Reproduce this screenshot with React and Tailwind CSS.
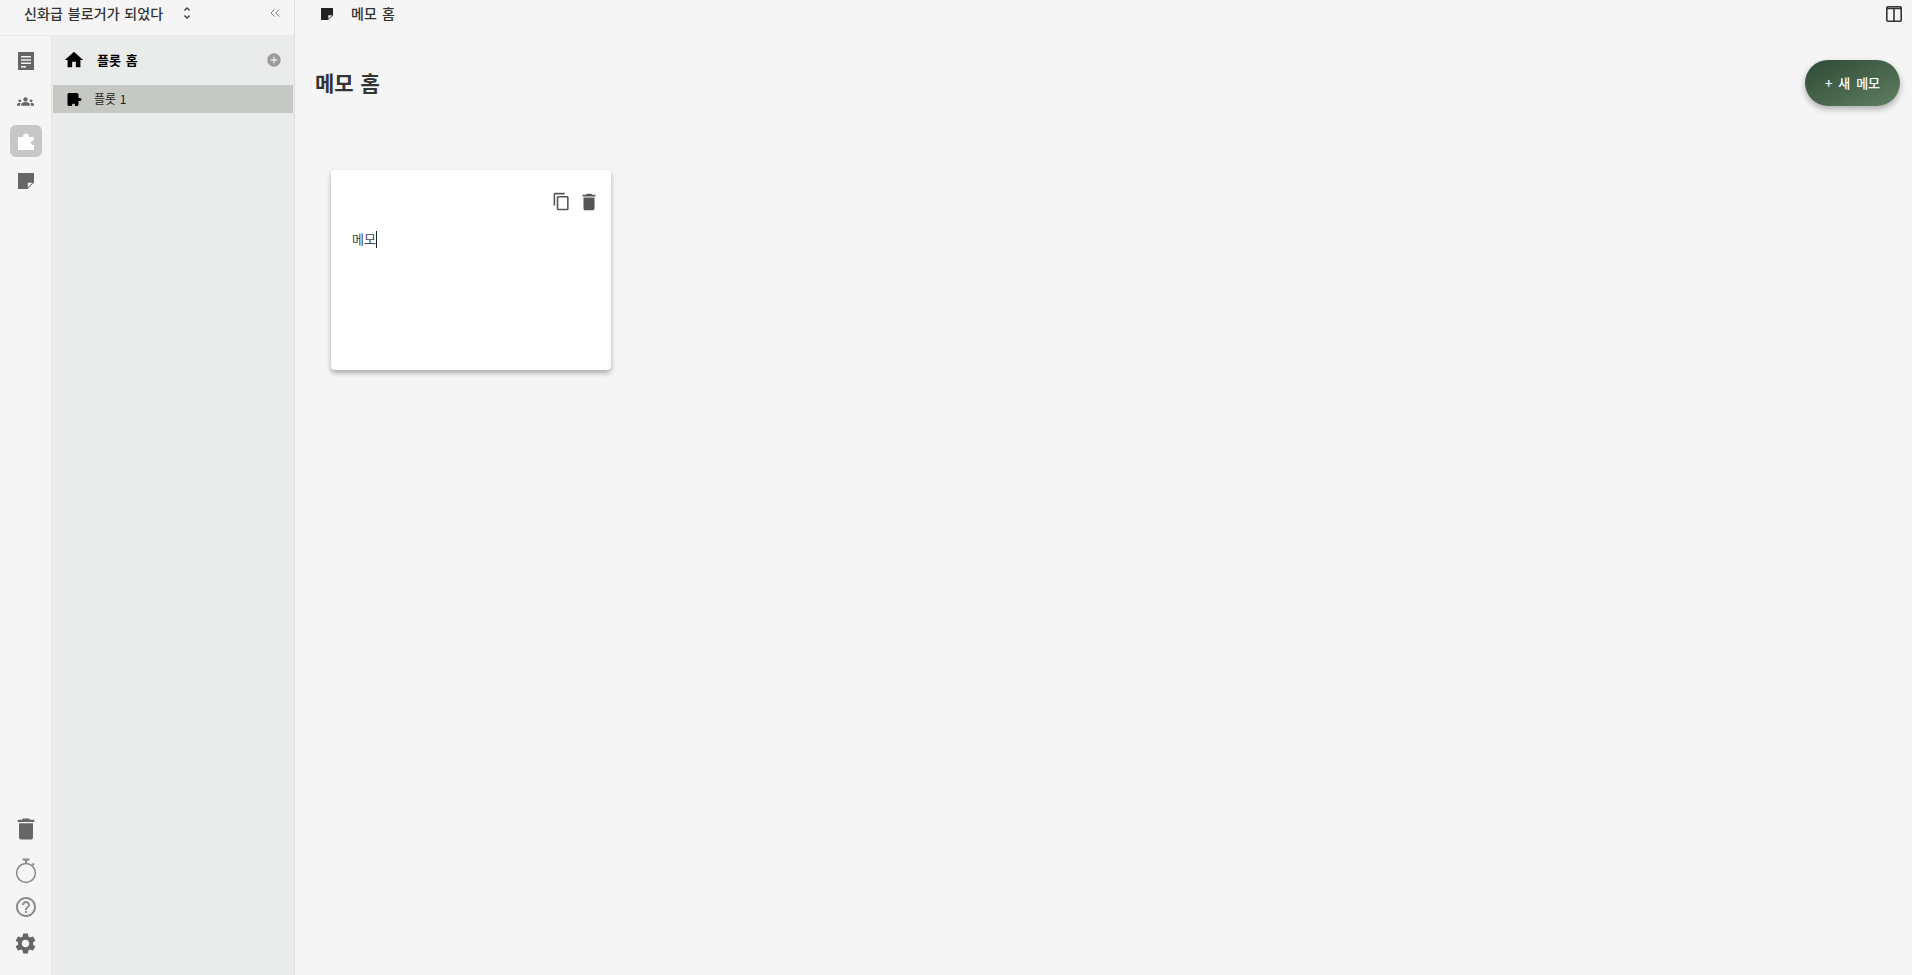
import { ChevronsLeft } from "lucide-react"

const PATHS = {
  article: "M4 3h16v18H4zM7 7v1.4h10V7zm0 3.3v1.4h10v-1.4zm0 3.3V15h10v-1.4zm0 3.4v1.4h5V17z",
  groups: "M12 12.75c1.63 0 3.07.39 4.24.9 1.08.48 1.76 1.56 1.76 2.73V18H6v-1.61c0-1.18.68-2.26 1.76-2.73 1.17-.52 2.61-.91 4.24-.91zM4 13c1.1 0 2-.9 2-2s-.9-2-2-2-2 .9-2 2 .9 2 2 2zm1.13 1.1c-.37-.06-.74-.1-1.13-.1-.99 0-1.93.21-2.78.58C.48 14.9 0 15.62 0 16.43V18h4.5v-1.61c0-.83.23-1.61.63-2.29zM20 13c1.1 0 2-.9 2-2s-.9-2-2-2-2 .9-2 2 .9 2 2 2zm4 3.43c0-.81-.48-1.53-1.22-1.85-.85-.37-1.79-.58-2.78-.58-.39 0-.76.04-1.13.1.4.68.63 1.46.63 2.29V18H24v-1.57zM12 6c1.66 0 3 1.34 3 3s-1.34 3-3 3-3-1.34-3-3 1.34-3 3-3z",
  home: "M10 20v-6h4v6h5v-8h3L12 3 2 12h3v8z",
  add: "M12 2C6.48 2 2 6.48 2 12s4.48 10 10 10 10-4.48 10-10S17.52 2 12 2zm5 11h-4v4h-2v-4H7v-2h4V7h2v4h4v2z",
  trash: "M6 19c0 1.1.9 2 2 2h8c1.1 0 2-.9 2-2V7H6v12zM19 4h-3.5l-1-1h-5l-1 1H5v2h14V4z",
  copy: "M16 1H4c-1.1 0-2 .9-2 2v14h2V3h12V1zm3 4H8c-1.1 0-2 .9-2 2v14c0 1.1.9 2 2 2h11c1.1 0 2-.9 2-2V7c0-1.1-.9-2-2-2zm0 16H8V7h11v14z",
  help: "M11 18h2v-2h-2v2zm1-16C6.48 2 2 6.48 2 12s4.48 10 10 10 10-4.48 10-10S17.52 2 12 2zm0 18c-4.41 0-8-3.59-8-8s3.59-8 8-8 8 3.59 8 8-3.59 8-8 8zm0-14c-2.21 0-4 1.79-4 4h2c0-1.1.9-2 2-2s2 .9 2 2c0 2-3 1.75-3 5h2c0-2.25 3-2.5 3-5 0-2.21-1.79-4-4-4z",
  settings: "M19.14 12.94c.04-.3.06-.61.06-.94 0-.32-.02-.64-.07-.94l2.03-1.58c.18-.14.23-.41.12-.61l-1.92-3.32c-.12-.22-.37-.29-.59-.22l-2.39.96c-.5-.38-1.03-.7-1.62-.94l-.36-2.54c-.04-.24-.24-.41-.48-.41h-3.84c-.24 0-.43.17-.47.41l-.36 2.54c-.59.24-1.13.57-1.62.94l-2.39-.96c-.22-.08-.47 0-.59.22L2.74 8.87c-.12.21-.08.47.12.61l2.03 1.58c-.05.3-.09.63-.09.94s.02.64.07.94l-2.03 1.58c-.18.14-.23.41-.12.61l1.92 3.32c.12.22.37.29.59.22l2.39-.96c.5.38 1.03.7 1.62.94l.36 2.54c.05.24.24.41.48.41h3.84c.24 0 .44-.17.47-.41l.36-2.54c.59-.24 1.13-.56 1.62-.94l2.39.96c.22.08.47 0 .59-.22l1.92-3.32c.12-.22.07-.47-.12-.61l-2.01-1.58zM12 15.6c-1.98 0-3.6-1.62-3.6-3.6s1.62-3.6 3.6-3.6 3.6 1.62 3.6 3.6-1.62 3.6-3.6 3.6z",
  unfold: "M12 5.83 15.17 9l1.41-1.41L12 3 7.41 7.59 8.83 9 12 5.83zm0 12.34L8.83 15l-1.41 1.41L12 21l4.59-4.59L15.17 15 12 18.17z",
}

function Icon({ name, className }) {
  return (
    <svg viewBox="0 0 24 24" fill="currentColor" fillRule="evenodd" className={className}>
      <path d={PATHS[name]} />
    </svg>
  )
}

// sharp square with a folded bottom right corner
function NoteIcon({ className }) {
  return (
    <svg viewBox="0 0 16 16" fill="currentColor" fillRule="evenodd" className={className}>
      <path d="M0 0h16v9.5L9.5 16H0zM9.8 14.6V9.8h4.8z" />
    </svg>
  )
}

function PuzzleRail({ className }) {
  return (
    <svg viewBox="0 0 24 24" fill="currentColor" className={className}>
      <path d="M4 8h5c0-2 1-3.5 3-3.5s3 1.5 3 3.5h5v3.5c-2 0-3 .8-3 2.2s1 2.3 3 2.3V21H4z" />
    </svg>
  )
}

function PuzzleRow({ className }) {
  return (
    <svg viewBox="0 0 15 13" fill="currentColor" className={className}>
      <path d="M2 0h8a1.5 1.5 0 0 1 1.5 1.5V5H13a1.5 1.5 0 0 1 0 3h-1.5v3.5A1.5 1.5 0 0 1 10 13H8v-1a1.5 1.5 0 0 0-3 0v1H2a1.5 1.5 0 0 1-1.5-1.5v-10A1.5 1.5 0 0 1 2 0z" />
    </svg>
  )
}

function Timer({ className }) {
  return (
    <svg viewBox="0 0 24 26" fill="none" stroke="currentColor" className={className}>
      <circle cx="12" cy="15" r="9.4" strokeWidth="1.5" />
      <path d="M8.5 1.5h7M12 1.5V5.5M18.5 7l1.5-1.5" strokeWidth="2" />
    </svg>
  )
}

function RailButton({ children, active }) {
  return (
    <div className={`w-8 h-8 flex items-center justify-center rounded-md ${active ? "bg-[#c5c8c4] text-white" : "text-[#666666]"}`}>
      {children}
    </div>
  )
}

export default function App() {
  return (
    <div className="flex h-[975px] overflow-hidden bg-[#f5f5f5] text-[#333333] font-['Noto_Sans_CJK_KR','Noto_Sans',sans-serif]">
      {/* Sidebar */}
      <aside className="w-[295px] shrink-0 flex flex-col border-r border-[#e0e0e0]">
        <div className="h-9 shrink-0 flex items-center pl-6 pr-[11px] border-b border-[#ebebeb]">
          <span className="text-[14px] leading-none font-medium tracking-[0.1px] [word-spacing:1.5px] text-[#333333] -mt-[10px]">신화급 블로거가 되었다</span>
          <Icon name="unfold" className="w-4 h-4 ml-[16px] text-[#444444] -mt-[10px]" />
          <ChevronsLeft className="w-4 h-4 ml-auto text-[#666666] -mt-[10px]" strokeWidth={1.25} />
        </div>
        <div className="flex-1 flex min-h-0">
          {/* Icon rail */}
          <div className="w-[52px] shrink-0 flex flex-col items-center border-r border-[#e2e6e2] pt-[9px] pb-[19px]">
            <div className="flex flex-col items-center gap-2">
              <RailButton><Icon name="article" className="w-6 h-6" /></RailButton>
              <RailButton><Icon name="groups" className="w-[17px] h-[17px]" /></RailButton>
              <RailButton active><PuzzleRail className="w-6 h-6" /></RailButton>
              <RailButton><NoteIcon className="w-4 h-4" /></RailButton>
            </div>
            <div className="mt-auto flex flex-col items-center">
              <Icon name="trash" className="w-7 h-7 text-[#666666]" />
              <Timer className="w-6 h-[26px] mt-[15px] text-[#8a8a8a]" />
              <Icon name="help" className="w-6 h-6 mt-[11px] text-[#8a8a8a]" />
              <Icon name="settings" className="w-[25px] h-[25px] mt-[12px] text-[#666666]" />
            </div>
          </div>
          {/* Plot list */}
          <div className="flex-1 bg-[#e9ecea] pt-[6px] px-px">
            <div className="h-9 flex items-center pl-[10px] pr-[11px]">
              <Icon name="home" className="w-[22px] h-[22px] text-black" />
              <span className="ml-[12px] text-[13px] font-bold [word-spacing:2px] text-black">플롯 홈</span>
              <Icon name="add" className="w-4 h-4 ml-auto text-[#9a9a9a]" />
            </div>
            <div className="h-7 mt-[7px] flex items-center pl-[14px] bg-[#c5c8c3]">
              <PuzzleRow className="w-[15px] h-[13px] text-black" />
              <span className="ml-[12px] text-[12px] [word-spacing:1px] text-[#222222]">플롯 1</span>
            </div>
          </div>
        </div>
      </aside>

      {/* Main */}
      <main className="flex-1 min-w-0 flex flex-col">
        <div className="h-7 shrink-0 flex items-center pl-[26px] pr-[10px]">
          <NoteIcon className="w-3 h-3 text-[#222222]" />
          <span className="ml-[18px] -mt-[3px] text-[14px] leading-none font-medium [word-spacing:2px] text-[#333333]">메모 홈</span>
          <svg viewBox="0 0 16 16" fill="none" stroke="currentColor" className="w-4 h-4 ml-auto text-[#333333]" strokeWidth="1.6">
            <rect x="0.8" y="0.8" width="14.4" height="14.4" rx="1" />
            <path d="M0.8 2.5h14.4M8 2.5V15" />
          </svg>
        </div>
        <div className="flex items-center justify-between pl-[20px] pr-[12px] mt-[32px]">
          <h1 className="text-[21px] font-bold [word-spacing:2px] text-[#333333]">메모 홈</h1>
          <button className="w-[95px] h-[46px] rounded-full bg-gradient-to-br from-[#2f4a35] to-[#5f7f62] text-white text-[13px] font-medium [word-spacing:3px] shadow-[0_3px_6px_rgba(0,0,0,0.3)]">
            + 새 메모
          </button>
        </div>
        <div className="pl-9 pt-[64px]">
          <div className="w-[280px] h-[200px] bg-white rounded-[4px] shadow-[0_3px_5px_rgba(0,0,0,0.3)]">
            <div className="flex justify-end gap-[7px] pt-[21px] pr-[11px]">
              <Icon name="copy" className="w-[19px] h-[19px] mt-[1px] text-[#555555]" />
              <Icon name="trash" className="w-[22px] h-[22px] text-[#555555]" />
            </div>
            <div className="pl-[21px] pt-[16px] flex items-center text-[13px] leading-5 text-[#444444]">
              메모<span className="w-px h-[17px] bg-[#222222]" />
            </div>
          </div>
        </div>
      </main>
    </div>
  )
}
